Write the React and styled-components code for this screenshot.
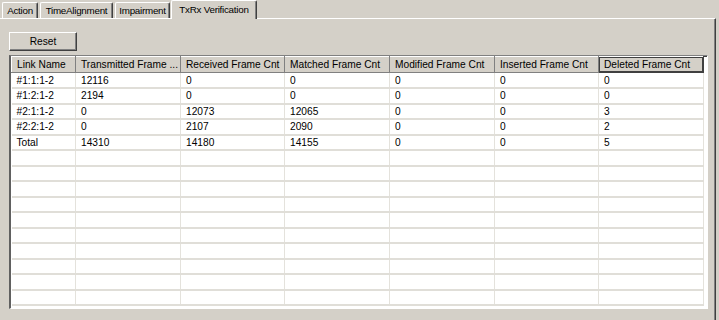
import React from "react";
import styled, { createGlobalStyle } from "styled-components";

const GlobalStyle = createGlobalStyle`
  html, body {
    margin: 0;
    padding: 0;
    background: #d4d0c8;
    font-family: "Liberation Sans", Arial, sans-serif;
    font-size: 10.2px;
    color: #000;
  }
`;

const Window = styled.div`
  width: 719px;
  height: 320px;
  background: #d4d0c8;
  overflow: hidden;
  display: flex;
  flex-direction: column;
`;

const TabStrip = styled.div`
  display: flex;
  align-items: flex-end;
  gap: 2px;
  height: 18px;
  padding-left: 2px;
  position: relative;
  z-index: 1;
`;

const Tab = styled.div`
  width: ${(p) => p.$width}px;
  height: ${(p) => (p.$active ? "19px" : "16px")};
  margin-bottom: ${(p) => (p.$active ? "-1px" : "0")};
  margin-left: ${(p) => (p.$active ? "-1px" : "0")};
  display: flex;
  align-items: center;
  justify-content: center;
  box-sizing: border-box;
  background: #d4d0c8;
  border-top: 1px solid #fff;
  border-left: 1px solid #fff;
  border-right: 1px solid #404040;
  box-shadow: inset -1px 0 0 #808080;
  border-radius: 2px 2px 0 0;
  white-space: nowrap;
  font-size: 9.8px;
  letter-spacing: -0.25px;
  padding-bottom: ${(p) => (p.$active ? "2px" : "0")};
`;

const Panel = styled.div`
  flex: 1;
  box-sizing: border-box;
  width: 716px;
  border-top: 1px solid #fff;
  border-right: 1px solid #404040;
  box-shadow: inset -1px 0 0 #808080;
  padding: 13px 0 0 9px;
  display: flex;
  flex-direction: column;
  align-items: flex-start;
`;

const Button = styled.button`
  width: 68px;
  height: 19px;
  box-sizing: border-box;
  background: #d4d0c8;
  font: inherit;
  color: #000;
  padding: 0;
  border: none;
  border-top: 1px solid #fff;
  border-left: 1px solid #fff;
  border-right: 1px solid #404040;
  border-bottom: 1px solid #404040;
  box-shadow: inset -1px -1px 0 #808080;
  margin-bottom: 4px;
`;

const TableFrame = styled.div`
  width: 699px;
  height: 254px;
  box-sizing: border-box;
  border-top: 1px solid #808080;
  border-left: 2px solid #606060;
  border-right: 1px solid #fff;
  border-bottom: 1px solid #fff;
  box-shadow: inset 0 1px 0 #404040;
  background: #fff;
  overflow: hidden;
`;

const Grid = styled.table`
  border-collapse: collapse;
  table-layout: fixed;
  width: 692px;
`;

const HeadCell = styled.th`
  height: 16px;
  box-sizing: border-box;
  padding: 0 0 0 5px;
  font-weight: normal;
  text-align: left;
  background: #d4d0c8;
  white-space: nowrap;
  overflow: hidden;
  border-top: 1px solid #fff;
  border-left: 1px solid #fff;
  border-right: 1px solid ${(p) => (p.$hot ? "#404040" : "#808080")};
  border-bottom: 1px solid ${(p) => (p.$hot ? "#404040" : "#808080")};
  box-shadow: ${(p) => (p.$hot ? "inset 0 0 0 1px #404040" : "inset -1px -1px 0 #d4d0c8")};
`;

const Cell = styled.td`
  height: 15.5px;
  box-sizing: border-box;
  padding: 0 0 0 5px;
  border-right: 1px solid #e4e2dc;
  border-bottom: 2px solid #e0ded8;
  white-space: nowrap;
  overflow: hidden;
  line-height: 13px;
`;

const columns = [
  { label: "Link Name", width: 64 },
  { label: "Transmitted Frame ...", width: 105 },
  { label: "Received Frame Cnt", width: 104 },
  { label: "Matched Frame Cnt", width: 105 },
  { label: "Modified Frame Cnt", width: 105 },
  { label: "Inserted Frame Cnt", width: 104 },
  { label: "Deleted Frame Cnt", width: 105 },
];

const rows = [
  ["#1:1:1-2", "12116", "0", "0", "0", "0", "0"],
  ["#1:2:1-2", "2194", "0", "0", "0", "0", "0"],
  ["#2:1:1-2", "0", "12073", "12065", "0", "0", "3"],
  ["#2:2:1-2", "0", "2107", "2090", "0", "0", "2"],
  ["Total", "14310", "14180", "14155", "0", "0", "5"],
];

const emptyRows = 10;

const tabs = [
  { label: "Action", width: 36 },
  { label: "TimeAlignment", width: 73 },
  { label: "Impairment", width: 55 },
  { label: "TxRx Verification", width: 86 },
];

export default function App() {
  const allRows = [
    ...rows,
    ...Array.from({ length: emptyRows }, () => columns.map(() => "")),
  ];
  return (
    <Window>
      <GlobalStyle />
      <TabStrip>
        {tabs.map((t, i) => (
          <Tab key={t.label} $width={t.width} $active={i === tabs.length - 1}>
            {t.label}
          </Tab>
        ))}
      </TabStrip>
      <Panel>
        <Button>Reset</Button>
        <TableFrame>
          <Grid>
            <colgroup>
              {columns.map((c) => (
                <col key={c.label} style={{ width: c.width }} />
              ))}
            </colgroup>
            <thead>
              <tr>
                {columns.map((c, i) => (
                  <HeadCell key={c.label} $hot={i === columns.length - 1}>
                    {c.label}
                  </HeadCell>
                ))}
              </tr>
            </thead>
            <tbody>
              {allRows.map((r, ri) => (
                <tr key={ri}>
                  {r.map((v, ci) => (
                    <Cell key={ci}>{v}</Cell>
                  ))}
                </tr>
              ))}
            </tbody>
          </Grid>
        </TableFrame>
      </Panel>
    </Window>
  );
}
